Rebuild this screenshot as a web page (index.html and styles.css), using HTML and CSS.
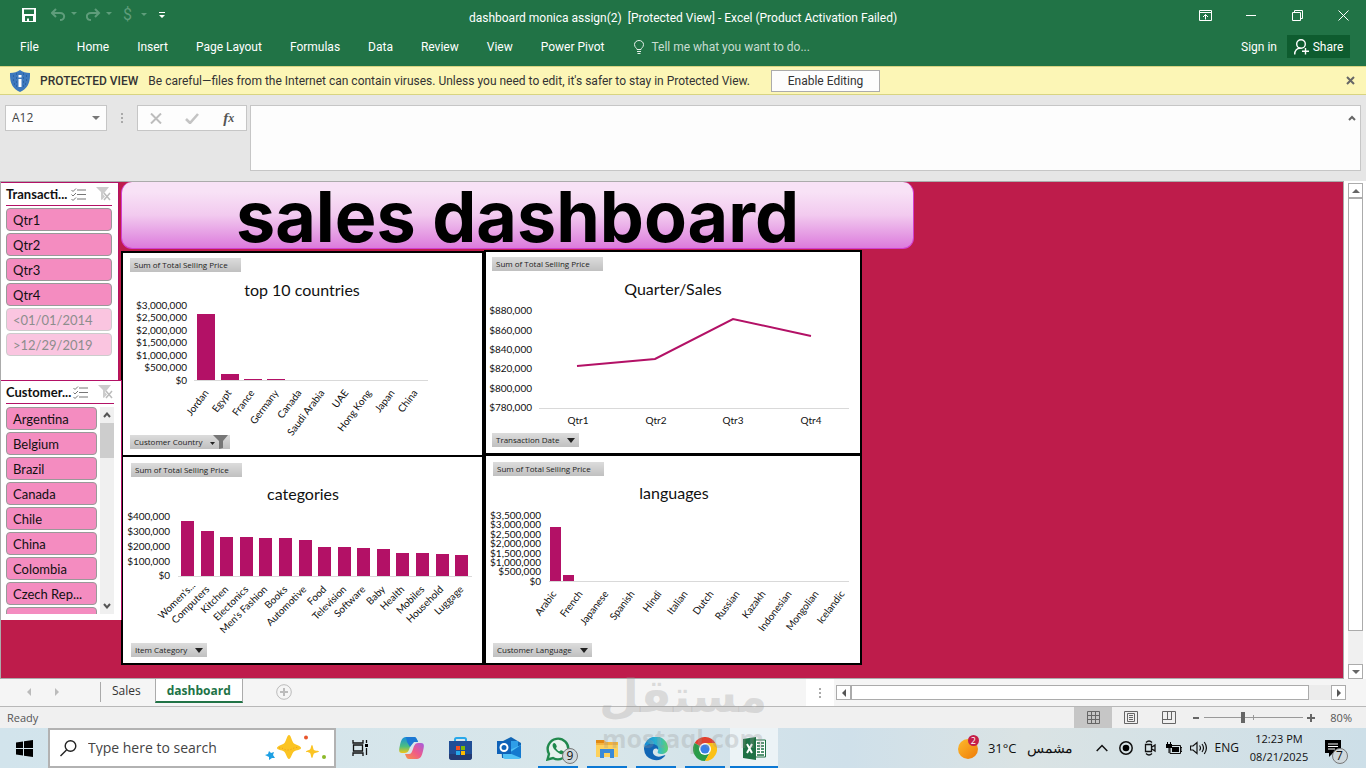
FILE: index.html
```html
<!DOCTYPE html>
<html lang="en">
<head>
<meta charset="utf-8">
<title>dashboard monica assign(2) - Excel</title>
<link rel="stylesheet" href="styles.css">
</head>
<body>
<div class="app">
  <header class="titlebar">
    <div class="quick">
      <button class="icon-btn" aria-label="Save"><svg width="14" height="14" viewBox="0 0 14 14"><path fill="#fff" fill-rule="evenodd" d="M0 0h14v14H0zM2 1.5v4.500h10V1.500zM3 8v5h2v-2.500h2V13h4V8z"/></svg></button>
      <button class="icon-btn dim" aria-label="Undo"><svg width="26" height="14" viewBox="0 0 26 14"><path d="M5 1 1 5l4 4M1 5h8c6 0 5 7 0 7" fill="none" stroke="#5f9d7b" stroke-width="2"/><path d="M20 4h6l-3 3z" fill="#5f9d7b"/></svg></button>
      <button class="icon-btn dim" aria-label="Redo"><svg width="26" height="14" viewBox="0 0 26 14"><path d="m9 1 4 4-4 4M13 5H5c-6 0-5 7 0 7" fill="none" stroke="#5f9d7b" stroke-width="2"/><path d="M20 4h6l-3 3z" fill="#5f9d7b"/></svg></button>
      <button class="icon-btn money" aria-label="Accounting format">$<svg width="6" height="4" viewBox="0 0 6 4"><path d="M0 0h6L3 3z" fill="#5f9d7b"/></svg></button>
      <button class="icon-btn" aria-label="Customize toolbar"><svg width="6" height="7" viewBox="0 0 6 7"><path d="M0 0h6v1H0zM0 3h6L3 6z" fill="#fff"/></svg></button>
    </div>
    <h1 class="doc-title">dashboard monica assign(2)&nbsp; [Protected View] - Excel (Product Activation Failed)</h1>
    <div class="win-buttons">
      <button aria-label="Ribbon display options"><svg width="13" height="11" viewBox="0 0 13 11"><path d="M.5.500h12v10H.500zM0 2.500h13M6.500 9.500V4.500M4 7l2.500-2.500L9 7" fill="none" stroke="#fff"/></svg></button>
      <button aria-label="Minimize"><svg width="10" height="11" viewBox="0 0 10 11"><path d="M0 5.500h10" stroke="#fff"/></svg></button>
      <button aria-label="Restore"><svg width="11" height="11" viewBox="0 0 11 11"><path d="M.5 2.500h8v8h-8zM2.500 2.500v-2h8v8h-2" fill="none" stroke="#fff"/></svg></button>
      <button aria-label="Close"><svg width="11" height="11" viewBox="0 0 11 11"><path d="m.5.500 10 10m0-10-10 10" stroke="#fff"/></svg></button>
    </div>
  </header>

  <nav class="ribbon" aria-label="Ribbon">
    <a class="tab file" href="#">File</a>
    <a class="tab" href="#">Home</a>
    <a class="tab" href="#">Insert</a>
    <a class="tab" href="#">Page Layout</a>
    <a class="tab" href="#">Formulas</a>
    <a class="tab" href="#">Data</a>
    <a class="tab" href="#">Review</a>
    <a class="tab" href="#">View</a>
    <a class="tab" href="#">Power Pivot</a>
    <label class="tell">
      <svg width="10" height="14" viewBox="0 0 10 14"><path d="M3 9.500C3 8 .5 7.500.5 4.500a4.500 4 0 0 1 9 0C9.500 7.500 7 8 7 9.500zM3 11.500h4M3.500 13.500h3" fill="none" stroke="#e6f0ea"/></svg>
      <input type="text" placeholder="Tell me what you want to do..." aria-label="Tell me what you want to do">
    </label>
    <a class="signin" href="#">Sign in</a>
    <button class="share"><svg width="15" height="16" viewBox="0 0 15 16"><circle cx="7" cy="5" r="4.300" fill="none" stroke="#fff" stroke-width="1.400"/><path d="M.7 15.500C.7 11.500 3 9 6.500 9.300M11.500 9v6.500M8 12.300h7" fill="none" stroke="#fff" stroke-width="1.400"/></svg>Share</button>
  </nav>

  <div class="notice" role="alert">
    <svg class="shield" width="20" height="22" viewBox="0 0 20 22"><path d="M10 0c2.500 2 6 3 10 3 .3 9-2 15.500-10 19C2 18.500-.3 12 0 3c4 0 7.500-1 10-3z" fill="#3c78bd"/><path d="M3 6h1M6 4h1M13 4h1M16 6h1M3 10h1M6 8h1M13 8h1M16 10h1M4 14h1M6 12h1M13 12h1M15 14h1M6 16h1M13 16h1" stroke="#1d4f8c"/><path d="M8.500 5h3v2.500h-3zM8.500 9h3v8h-3z" fill="#fff"/></svg>
    <strong class="notice-head">PROTECTED VIEW</strong>
    <span class="notice-text">Be careful—files from the Internet can contain viruses. Unless you need to edit, it's safer to stay in Protected View.</span>
    <button class="enable">Enable Editing</button>
    <button class="notice-close" aria-label="Close message"><svg width="9" height="9" viewBox="0 0 9 9"><path d="m1 1 7 7m0-7L1 8" stroke="#666" stroke-width="2"/></svg></button>
  </div>

  <div class="formula-row">
    <div class="name-box">
      <input type="text" value="A12" aria-label="Name box">
      <button class="icon-btn" aria-label="Choose a name"><svg width="8" height="4" viewBox="0 0 8 4"><path d="M0 0h8L4 4z" fill="#777"/></svg></button>
    </div>
    <svg class="grip" width="2" height="10" viewBox="0 0 2 10"><path d="M0 0h2v2H0zM0 4h2v2H0zM0 8h2v2H0z" fill="#aaa"/></svg>
    <div class="fx-box">
      <button class="icon-btn" aria-label="Cancel"><svg width="12" height="11" viewBox="0 0 12 11"><path d="m1 .5 10 10m0-10-10 10" stroke="#bdbdbd" stroke-width="2"/></svg></button>
      <button class="icon-btn" aria-label="Enter"><svg width="14" height="11" viewBox="0 0 14 11"><path d="m1 6 4 4 8-9" fill="none" stroke="#c4c4c4" stroke-width="2.600"/></svg></button>
      <button class="icon-btn fx" aria-label="Insert function"><i>f</i><i class="fx-x">x</i></button>
    </div>
    <div class="formula">
      <textarea aria-label="Formula bar"></textarea>
      <button class="icon-btn" aria-label="Collapse formula bar"><svg width="8" height="6" viewBox="0 0 8 6"><path d="m1 5 3-3 3 3" fill="none" stroke="#666" stroke-width="2"/></svg></button>
    </div>
  </div>

  <main class="work">
    <div class="sheet">
      <aside class="slicers">
        <section class="slicer">
          <div class="slicer-head">
            <h2>Transacti...</h2>
            <button class="icon-btn" aria-label="Multi-select"><svg width="16" height="13" viewBox="0 0 16 13"><path d="M6 2h9M6 6.500h9M6 11h9" stroke="#777"/><path d="m.5 2 1.500 1.500L5 .500m-4.500 6L2 8l3-3m-4.500 6L2 12.500l3-3" fill="none" stroke="#777"/></svg></button>
            <button class="icon-btn" aria-label="Clear filter"><svg width="16" height="14" viewBox="0 0 16 14"><path d="M0 0h13L9 5v6l-4 2V5z" fill="#ccc"/><path d="m8 6 6 7m0-7-6 7" stroke="#fff" stroke-width="3"/><path d="m8 6 6 7m0-7-6 7" stroke="#bbb" stroke-width="1.500"/></svg></button>
          </div>
          <div class="slicer-list">
            <button>Qtr1</button>
            <button>Qtr2</button>
            <button>Qtr3</button>
            <button>Qtr4</button>
            <button class="off">&lt;01/01/2014</button>
            <button class="off">&gt;12/29/2019</button>
          </div>
        </section>
        <section class="slicer wide">
          <div class="slicer-head">
            <h2>Customer...</h2>
            <button class="icon-btn" aria-label="Multi-select"><svg width="16" height="13" viewBox="0 0 16 13"><path d="M6 2h9M6 6.500h9M6 11h9" stroke="#777"/><path d="m.5 2 1.500 1.500L5 .500m-4.500 6L2 8l3-3m-4.500 6L2 12.500l3-3" fill="none" stroke="#777"/></svg></button>
            <button class="icon-btn" aria-label="Clear filter"><svg width="16" height="14" viewBox="0 0 16 14"><path d="M0 0h13L9 5v6l-4 2V5z" fill="#ccc"/><path d="m8 6 6 7m0-7-6 7" stroke="#fff" stroke-width="3"/><path d="m8 6 6 7m0-7-6 7" stroke="#bbb" stroke-width="1.500"/></svg></button>
          </div>
          <div class="slicer-body">
            <div class="slicer-list">
              <button>Argentina</button>
              <button>Belgium</button>
              <button>Brazil</button>
              <button>Canada</button>
              <button>Chile</button>
              <button>China</button>
              <button>Colombia</button>
              <button>Czech Rep...</button>
              <button aria-label="Next country"></button>
            </div>
            <div class="slicer-scroll">
              <button class="icon-btn" aria-label="Scroll up"><svg width="8" height="6" viewBox="0 0 8 6"><path d="m1 5 3-3.500L7 5" fill="none" stroke="#555" stroke-width="2"/></svg></button>
              <div class="slicer-thumb"></div>
              <button class="icon-btn" aria-label="Scroll down"><svg width="8" height="6" viewBox="0 0 8 6"><path d="m1 1 3 3.500L7 1" fill="none" stroke="#555" stroke-width="2"/></svg></button>
            </div>
          </div>
        </section>
      </aside>

      <div class="board">
        <h2 class="banner">sales dashboard</h2>
        <div class="charts">
          <div class="chart-col">
            <section class="chart">
              <button class="field">Sum of Total Selling Price</button>
              <svg class="plot" width="359" height="163" viewBox="123 272 359 163" role="img" aria-label="Top 10 countries by total selling price">
                <text class="ct" x="302" y="296">top 10 countries</text>
                <g class="yl"><text x="187" y="309">$3,000,000</text><text x="187" y="321">$2,500,000</text><text x="187" y="334">$2,000,000</text><text x="187" y="346">$1,500,000</text><text x="187" y="359">$1,000,000</text><text x="187" y="371">$500,000</text><text x="187" y="384">$0</text></g>
                <path class="bars" d="M197 314h18v66h-18zM221 374h18v6h-18zM244 379h18v1h-18zM267 379h18v1h-18z"/>
                <path class="axis" d="M194 380.500h234"/>
                <g class="xl"><text transform="translate(209 393) rotate(-53)">Jordan</text><text transform="translate(232 393) rotate(-53)">Egypt</text><text transform="translate(255 393) rotate(-53)">France</text><text transform="translate(279 393) rotate(-53)">Germany</text><text transform="translate(302 393) rotate(-53)">Canada</text><text transform="translate(325 393) rotate(-53)">Saudi Arabia</text><text transform="translate(349 393) rotate(-53)">UAE</text><text transform="translate(372 393) rotate(-53)">Hong Kong</text><text transform="translate(395 393) rotate(-53)">Japan</text><text transform="translate(418 393) rotate(-53)">China</text></g>
              </svg>
              <button class="field f-country">Customer Country<svg width="20" height="14" viewBox="0 0 20 14"><path d="M0 7h5l-2.500 3z" fill="#222"/><path d="M3 0h15l-5 6v7l-4 1V6z" fill="#777"/></svg></button>
            </section>
            <section class="chart lower">
              <button class="field">Sum of Total Selling Price</button>
              <svg class="plot" width="359" height="166" viewBox="123 477 359 166" role="img" aria-label="Categories by total selling price">
                <text class="ct" x="303" y="500">categories</text>
                <g class="yl"><text x="170" y="520">$400,000</text><text x="170" y="535">$300,000</text><text x="170" y="550">$200,000</text><text x="170" y="565">$100,000</text><text x="170" y="579">$0</text></g>
                <path class="bars" d="M181 521h13v55h-13zM201 531h13v45h-13zM220 537h13v39h-13zM240 537h13v39h-13zM259 538h13v38h-13zM279 538h13v38h-13zM299 540h13v36h-13zM318 547h13v29h-13zM338 547h13v29h-13zM357 548h13v28h-13zM377 549h13v27h-13zM396 553h13v23h-13zM416 553h13v23h-13zM436 554h13v22h-13zM455 555h13v21h-13z"/>
                <path class="axis" d="M178 576.500h294"/>
                <g class="xl"><text transform="translate(196 586) rotate(-45)">Women's...</text><text transform="translate(210 590) rotate(-45)">Computers</text><text transform="translate(229 590) rotate(-45)">Kitchen</text><text transform="translate(249 590) rotate(-45)">Electonics</text><text transform="translate(268 590) rotate(-45)">Men's Fashion</text><text transform="translate(288 590) rotate(-45)">Books</text><text transform="translate(307 590) rotate(-45)">Automotive</text><text transform="translate(327 590) rotate(-45)">Food</text><text transform="translate(347 590) rotate(-45)">Television</text><text transform="translate(366 590) rotate(-45)">Software</text><text transform="translate(386 590) rotate(-45)">Baby</text><text transform="translate(405 590) rotate(-45)">Health</text><text transform="translate(425 590) rotate(-45)">Mobiles</text><text transform="translate(444 590) rotate(-45)">Household</text><text transform="translate(464 590) rotate(-45)">Luggage</text></g>
              </svg>
              <button class="field f-item">Item Category<svg width="8" height="5" viewBox="0 0 8 5"><path d="M0 0h8L4 5z" fill="#222"/></svg></button>
            </section>
          </div>
          <div class="chart-col right">
            <section class="chart">
              <button class="field">Sum of Total Selling Price</button>
              <svg class="plot" width="374" height="162" viewBox="486 271 374 162" role="img" aria-label="Sales by quarter">
                <text class="ct" x="673" y="295">Quarter/Sales</text>
                <g class="yl"><text x="532" y="314">$880,000</text><text x="532" y="334">$860,000</text><text x="532" y="353">$840,000</text><text x="532" y="372">$820,000</text><text x="532" y="392">$800,000</text><text x="532" y="411">$780,000</text></g>
                <path class="axis" d="M539 408.500h310"/>
                <path d="M577 366 655 359 733 319 811 336" fill="none" stroke="#b31166" stroke-width="2"/>
                <g class="ql"><text x="578" y="424">Qtr1</text><text x="656" y="424">Qtr2</text><text x="733" y="424">Qtr3</text><text x="811" y="424">Qtr4</text></g>
              </svg>
              <button class="field f-date">Transaction Date<svg width="8" height="5" viewBox="0 0 8 5"><path d="M0 0h8L4 5z" fill="#222"/></svg></button>
            </section>
            <section class="chart lower">
              <button class="field">Sum of Total Selling Price</button>
              <svg class="plot" width="374" height="167" viewBox="486 476 374 167" role="img" aria-label="Languages by total selling price">
                <text class="ct" x="674" y="499">languages</text>
                <g class="yl"><text x="541" y="519">$3,500,000</text><text x="541" y="528">$3,000,000</text><text x="541" y="538">$2,500,000</text><text x="541" y="547">$2,000,000</text><text x="541" y="557">$1,500,000</text><text x="541" y="566">$1,000,000</text><text x="541" y="575">$500,000</text><text x="541" y="585">$0</text></g>
                <path class="bars" d="M550 527h11v54h-11zM563 575h11v6h-11z"/>
                <path class="axis" d="M549 581.500h300"/>
                <g class="xl"><text transform="translate(557 594) rotate(-53)">Arabic</text><text transform="translate(583 594) rotate(-53)">French</text><text transform="translate(609 594) rotate(-53)">Japanese</text><text transform="translate(635 594) rotate(-53)">Spanish</text><text transform="translate(662 594) rotate(-53)">Hindi</text><text transform="translate(688 594) rotate(-53)">Italian</text><text transform="translate(714 594) rotate(-53)">Dutch</text><text transform="translate(740 594) rotate(-53)">Russian</text><text transform="translate(766 594) rotate(-53)">Kazakh</text><text transform="translate(792 594) rotate(-53)">Indonesian</text><text transform="translate(819 594) rotate(-53)">Mongolian</text><text transform="translate(845 594) rotate(-53)">Icelandic</text></g>
              </svg>
              <button class="field f-lang">Customer Language<svg width="8" height="5" viewBox="0 0 8 5"><path d="M0 0h8L4 5z" fill="#222"/></svg></button>
            </section>
          </div>
        </div>
      </div>
    </div>
    <div class="vscroll">
      <button aria-label="Scroll up"><svg width="8" height="4" viewBox="0 0 8 4"><path d="M0 4h8L4 0z" fill="#666"/></svg></button>
      <div class="vthumb"></div>
      <div class="vtrack"></div>
      <button aria-label="Scroll down"><svg width="8" height="4" viewBox="0 0 8 4"><path d="M0 0h8L4 4z" fill="#666"/></svg></button>
    </div>
  </main>

  <div class="sheet-tabs">
    <div class="tab-arrows">
      <button class="icon-btn" aria-label="Previous sheet"><svg width="4" height="8" viewBox="0 0 4 8"><path d="M4 0v8L0 4z" fill="#bbb"/></svg></button>
      <button class="icon-btn" aria-label="Next sheet"><svg width="4" height="8" viewBox="0 0 4 8"><path d="M0 0v8l4-4z" fill="#bbb"/></svg></button>
    </div>
    <a class="sheet-tab" href="#">Sales</a>
    <a class="sheet-tab active" href="#">dashboard</a>
    <button class="icon-btn add" aria-label="New sheet"><svg width="16" height="16" viewBox="0 0 16 16"><circle cx="8" cy="8" r="7.300" fill="none" stroke="#bbb"/><path d="M8 4v8M4 8h8" stroke="#bbb" stroke-width="2"/></svg></button>
    <div class="hgrip"><svg width="2" height="10" viewBox="0 0 2 10"><path d="M0 0h2v2H0zM0 4h2v2H0zM0 8h2v2H0z" fill="#aaa"/></svg></div>
    <div class="hscroll">
      <button aria-label="Scroll left"><svg width="4" height="8" viewBox="0 0 4 8"><path d="M4 0v8L0 4z" fill="#555"/></svg></button>
      <div class="hthumb"></div>
      <div class="htrack"></div>
      <button aria-label="Scroll right"><svg width="4" height="8" viewBox="0 0 4 8"><path d="M0 0v8l4-4z" fill="#555"/></svg></button>
    </div>
  </div>

  <div class="status">
    <span class="ready">Ready</span>
    <button class="view on" aria-label="Normal view"><svg width="13" height="13" viewBox="0 0 13 13"><path d="M.5.500h12v12H.500zM4.500 0v13M8.500 0v13M0 4.500h13M0 8.500h13" fill="none" stroke="#666"/></svg></button>
    <button class="view" aria-label="Page layout view"><svg width="14" height="13" viewBox="0 0 14 13"><path d="M.5.500h13v12H.500zM3.500 2.500h7v8h-7zM5 4.500h4M5 6.500h4M5 8.500h4" fill="none" stroke="#666"/></svg></button>
    <button class="view" aria-label="Page break view"><svg width="14" height="13" viewBox="0 0 14 13"><path d="M.5.500h13v12H.500zM5.500 0v8M9.500 0v8M0 8.500h10" fill="none" stroke="#666"/></svg></button>
    <button class="icon-btn zoom-btn" aria-label="Zoom out"><svg width="8" height="8" viewBox="0 0 8 8"><path d="M1 4h6" stroke="#666" stroke-width="2"/></svg></button>
    <input class="zoom" type="range" min="0" max="100" value="39" aria-label="Zoom">
    <button class="icon-btn zoom-btn" aria-label="Zoom in"><svg width="8" height="8" viewBox="0 0 8 8"><path d="M0 4h8M4 0v8" stroke="#666" stroke-width="2"/></svg></button>
    <span class="percent">80%</span>
  </div>

  <footer class="taskbar">
    <button class="task start" aria-label="Start"><svg width="17" height="17" viewBox="0 0 17 17"><path d="M0 2.500 7 1.500V8H0zM8 1.300 17 0v8H8zM0 9h7v6.500l-7-1zM8 9h9v8l-9-1.300z"/></svg></button>
    <label class="search">
      <svg width="17" height="17" viewBox="0 0 17 17"><circle cx="10.500" cy="6" r="5.300" fill="none" stroke="#222" stroke-width="1.400"/><path d="m6.500 10-6 6" stroke="#222" stroke-width="1.400"/></svg>
      <input type="text" placeholder="Type here to search" aria-label="Type here to search">
      <svg width="62" height="26" viewBox="0 0 62 26"><path d="M24 0c2 0 3 7 5 8.500S36 11 36 13s-5 2-7 3.500S26 24 24 24s-3-6-5-7.500S12 15 12 13s5-3 7-4.500S22 0 24 0z" fill="#fbc423"/><path d="M14 13c4-1 4 2 9 2 4 0 7-4 11-2" fill="none" stroke="#ef9a1a" stroke-dasharray="1 2"/><path d="M47 10c1 0 1 4 2 5s5 .500 5 1.500-4 1-5 2-1 4.500-2 4.500-1-4-2-5-4-.500-4-1.500 3-1 4-2 1-4.500 2-4.500z" fill="#fbc423"/><path d="m4 16 2 2 3-1-1 3 2 3-3 0-3 2 0-3-4-2 3-1z" fill="#1ea0e4"/><circle cx="41" cy="2.500" r="2" fill="#e8562c"/><circle cx="59" cy="22" r="2" fill="#8cb929"/></svg>
    </label>
    <button class="task" aria-label="Task view"><svg width="17" height="16" viewBox="0 0 17 16"><path d="M1 0v3h10V0M1 16v-3h10v3M1.500 5h9v6h-9z" fill="none" stroke="#111" stroke-width="1.300"/><path d="M14.500 0v3M14.500 8v7" stroke="#111" stroke-width="1.300"/><path d="M13 4h3v3h-3z"/></svg></button>
    <button class="task apart" aria-label="Copilot"><svg width="25" height="22" viewBox="0 0 25 22"><defs><linearGradient id="cpa" x1="0" y1="0" x2="0" y2="1"><stop stop-color="#168edd"/><stop offset=".6" stop-color="#4fbf7c"/><stop offset="1" stop-color="#f1c518"/></linearGradient><linearGradient id="cpb" x1="1" y1="0" x2="0" y2="1"><stop stop-color="#a55ce0"/><stop offset=".5" stop-color="#ef5a88"/><stop offset="1" stop-color="#f99545"/></linearGradient></defs><path d="M7 0h8c2 0 3 2 4 5h-4c-2 0-3 2-4 5s-2 6-5 6H3c-4 0-3-4-2-8S3 0 7 0z" fill="url(#cpa)"/><path d="M7 0h8c2 0 3 2 4 5h-4L11 10 8 5z" fill="#1c78d4"/><path d="M18 22h-8c-2 0-3-2-4-5h4c2 0 3-2 4-5s2-6 5-6h3c4 0 3 4 2 8s-2 8-6 8z" fill="url(#cpb)"/></svg></button>
    <button class="task" aria-label="Microsoft Store"><svg width="23" height="23" viewBox="0 0 23 23"><path d="M6 5V2.500Q6 1 7.500 1h8Q17 1 17 2.500V5" fill="none" stroke="#28a8ea" stroke-width="2"/><path d="M0 4h23v16q0 3-3 3H3q-3 0-3-3z" fill="#1f4e96"/><path d="M0 17h23v3q0 3-3 3H3q-3 0-3-3z" fill="#243a72"/><path d="M7 9h4v4H7z" fill="#f25022"/><path d="M12 9h4v4h-4z" fill="#7fba00"/><path d="M7 14h4v4H7z" fill="#28a8ea"/><path d="M12 14h4v4h-4z" fill="#ffb900"/></svg></button>
    <button class="task" aria-label="Outlook"><svg width="24" height="22" viewBox="0 0 24 22"><path d="M4 5 14 0l10 6v15H5z" fill="#1066b5"/><path d="M7 4h14v10H7z" fill="#2f9ee8"/><path d="m24 8-18 8v4q0 2 2 2h14q2 0 2-2z" fill="#50c0f5"/><path d="m24 8-12 8 12 5z" fill="#1479cf"/><path d="M0 4h14v13H0z" fill="#0f62b8"/><circle cx="7" cy="10.500" r="3.500" fill="none" stroke="#fff" stroke-width="2"/></svg></button>
    <button class="task open" aria-label="WhatsApp, 9 unread"><span class="badged"><svg width="24" height="24" viewBox="0 0 24 24"><path d="M1.500 22.500 3 17A10.300 10.300 0 1 1 7 21z" fill="#e9f2ee" stroke="#21894d" stroke-width="2.400"/><path d="M8 6c-2 1-2 4 1 7s6 5 8 4c2-1 1-2.500 0-3s-2-1-2.500-.5-1 1-1.500.7c-1.500-.7-2.500-2-3-3 0-.7 1-1 .7-2S9.500 5.500 8 6z" fill="#21894d"/></svg><span class="badge b9">9</span></span></button>
    <button class="task open" aria-label="File Explorer"><svg width="22" height="20" viewBox="0 0 22 20"><path d="M0 1h8l2 2h12v15H0z" fill="#f4b33d"/><path d="M0 1h8v3H0z" fill="#e28a14"/><path d="M0 6h22v12H0z" fill="#fdd15c"/><path d="M4 10h14v9h-4v-5H8v5H4z" fill="#3a8ad8"/></svg></button>
    <button class="task open" aria-label="Edge"><svg width="24" height="24" viewBox="0 0 24 24"><defs><linearGradient id="eda"><stop stop-color="#1487d4"/><stop offset=".6" stop-color="#2fb8cf"/><stop offset="1" stop-color="#5fd16a"/></linearGradient></defs><path d="M0 12A12 12 0 0 1 24 11c0 4-3 6-7 6-3 0-4-1-3-3 1-3-1-5-4-5-5 0-9 3-10 3z" fill="url(#eda)"/><path d="M0 12c0-3 4-5 8-5 4 0 7 2 6 6-1-2-4-2-5 1-1 4 4 7 9 5 2-.5 4-1.500 3 0A12 12 0 0 1 0 12z" fill="#1266b5"/></svg></button>
    <button class="task open" aria-label="Chrome"><svg width="24" height="24" viewBox="0 0 24 24"><path d="M12 12 1.600 6A12 12 0 0 1 22.400 6z" fill="#e1412f"/><path d="M12 12 1.600 6A12 12 0 0 0 12 24l5.200-9z" fill="#2a9c49"/><path d="M12 6h10.400A12 12 0 0 1 12 24l5.200-9z" fill="#fbc116"/><circle cx="12" cy="12" r="6" fill="#fff"/><circle cx="12" cy="12" r="4.600" fill="#3a7fe6"/></svg></button>
    <button class="task open current" aria-label="Excel"><svg width="23" height="23" viewBox="0 0 23 23"><path d="M11 3h11.500v17H11z" fill="#fff" stroke="#1e7145"/><path d="M14 6h3M18 6h3M14 9h3M18 9h3M14 12h3M18 12h3M14 15h3M18 15h3M14 18h7" stroke="#1e7145" stroke-width="1.500"/><path d="M0 2 13 0v23L0 21z" fill="#1e7145"/><path d="m4 7 5 9M9 7l-5 9" stroke="#fff" stroke-width="2"/></svg></button>

    <div class="tray">
      <button class="weather"><span class="badged"><svg width="20" height="22" viewBox="0 0 20 22"><defs><linearGradient id="sun" x1="0" y1="0" x2="1" y2="1"><stop stop-color="#fdbb2d"/><stop offset="1" stop-color="#ee7a08"/></linearGradient></defs><circle cx="10" cy="12" r="10" fill="url(#sun)"/></svg><span class="badge b2">2</span></span><span>31°C</span><span class="arabic" lang="ar" dir="rtl">مشمس</span></button>
      <button class="icon-btn" aria-label="Hidden icons"><svg width="12" height="8" viewBox="0 0 12 8"><path d="m.7 7 5.300-5.500L11.300 7" fill="none" stroke="#111" stroke-width="1.500"/></svg></button>
      <button class="icon-btn" aria-label="Recorder"><svg width="14" height="14" viewBox="0 0 14 14"><circle cx="7" cy="7" r="6.200" fill="none" stroke="#111" stroke-width="1.500"/><circle cx="7" cy="7" r="3.300"/></svg></button>
      <button class="icon-btn" aria-label="Meet now"><svg width="12" height="16" viewBox="0 0 12 16"><path d="M1.500 4.500h6v7h-6zM8 7l3-2v6L8 9M2 2.500q3-3 6 0M2 13.500q3 3 6 0" fill="none" stroke="#111" stroke-width="1.300"/></svg></button>
      <button class="icon-btn" aria-label="Battery"><svg width="16" height="13" viewBox="0 0 16 13"><path d="M4 3.500h10.500v8H4zM14.500 5.500H16v4h-1.500" fill="none" stroke="#111"/><path d="M6 5h7v5H6zM0 2h6v4H0zM1 0h1v3H1zM4 0h1v3H4zM2.500 6h1v5h-1z"/></svg></button>
      <button class="icon-btn" aria-label="Volume"><svg width="17" height="14" viewBox="0 0 17 14"><path d="M.5 5H3l4-3.500v11L3 9H.500zM9.500 4.500q2 2.500 0 5M12 3q3 4 0 8M14.300 1q4.200 6 0 12" fill="none" stroke="#111" stroke-width="1.200"/></svg></button>
      <button class="lang">ENG</button>
      <button class="clock"><span>12:23 PM</span><span>08/21/2025</span></button>
      <button class="icon-btn notes" aria-label="7 notifications"><span class="badged"><svg width="16" height="17" viewBox="0 0 16 17"><path d="M0 0h16v13H8l-4 4v-4H0z"/><path d="M3 4h10M3 6.500h10M3 9h7" stroke="#fff"/></svg><span class="badge b7">7</span></span></button>
    </div>
  </footer>

  <div class="watermark" aria-hidden="true">
    <span class="wm-ar" lang="ar">مستقل</span>
    <span class="wm-en">mostaql.com</span>
  </div>
</div>
</body>
</html>
```
FILE: styles.css
```css
* { box-sizing: border-box; }
body { margin: 0; font: 12px/16px "Open Sans", "Noto Sans", sans-serif; color: #333; }
button, input, textarea { font: inherit; color: inherit; border: 0; padding: 0; margin: 0; background: none; border-radius: 0; }
input:focus, textarea:focus { outline: none; }
a { color: inherit; text-decoration: none; }
h1, h2 { margin: 0; font-size: inherit; font-weight: 400; }
svg { display: block; flex: none; }
.icon-btn { display: flex; align-items: center; justify-content: center; }

.app { position: relative; display: flex; flex-direction: column; min-height: 100vh; background: #e6e6e6; }
.titlebar, .ribbon, .notice { font-family: Roboto, "Open Sans", sans-serif; }

/* title bar */
.titlebar { display: grid; grid-template-columns: 1fr auto 1fr; align-items: center; height: 30px; background: #217346; color: #fff; }
.quick { display: flex; align-items: center; gap: 9px; padding-left: 22px; }
.quick .icon-btn:first-child { margin-right: 6px; }
.money { gap: 9px; width: 24px; margin-left: 2px; color: #5f9d7b; font-size: 16px; }
.quick .icon-btn:last-child { margin-left: 3px; }
.doc-title { white-space: nowrap; padding-top: 5px; }
.win-buttons { display: flex; justify-content: flex-end; }
.win-buttons button { display: flex; align-items: center; justify-content: center; width: 46px; height: 30px; }

/* ribbon */
.ribbon { display: flex; align-items: center; height: 36px; padding-bottom: 3px; background: #217346; color: #fff; }
.tab { padding: 0 14px; white-space: nowrap; }
.tab.file { padding: 0 24px 0 20px; }
.tell { display: flex; flex: 1; align-items: center; gap: 7px; margin-left: 16px; }
.tell input { flex: 1; }
.tell input::placeholder { color: #c8ddd1; opacity: 1; }
.share { display: flex; align-items: center; justify-content: center; gap: 4px; width: 63px; height: 23px; margin: 0 16px 0 10px; background: #0e5c2f; }

/* protected view message */
.notice { display: flex; align-items: center; height: 29px; padding-left: 10px; background: #fcf6b6; border-top: 1px solid #d8d481; border-bottom: 1px solid #d8d481; white-space: nowrap; }
.notice-head { margin: 0 10px; font-weight: 500; }
.enable { width: 109px; height: 22px; margin-left: 21px; background: #fdfdfd; border: 1px solid #ababab; }
.notice-close { margin: 0 11px 0 auto; }

/* formula row */
.formula-row { display: flex; align-items: flex-start; padding: 10px 5px; }
.name-box { display: flex; align-items: center; width: 102px; height: 26px; padding: 0 6px; background: #fdfdfd; border: 1px solid #c6c6c6; }
.name-box input { flex: 1; min-width: 0; color: #444; }
.grip { margin: 8px 14px; }
.fx-box { display: flex; align-items: center; justify-content: space-around; width: 110px; height: 26px; background: #fdfdfd; border: 1px solid #c6c6c6; }
.fx { font: 700 15px/20px "Liberation Serif", serif; color: #555; }
.fx-x { font-size: 12px; }
.formula { display: flex; flex: 1; align-items: flex-start; height: 66px; margin-left: 3px; padding-right: 4px; background: #fdfdfd; border: 1px solid #c6c6c6; }
.formula textarea { flex: 1; height: 100%; resize: none; }
.formula .icon-btn { margin-top: 9px; }

/* worksheet */
.work { display: flex; flex: 1; background: #fff; }
.sheet { display: flex; flex: 1; align-items: flex-start; background: #be1c4b; border: 1px solid #ababab; }
.slicers { flex: none; width: 120px; font-family: Lato, sans-serif; color: #111; }
.slicer { width: 118px; height: 198px; padding: 0 6px 0 5px; background: #fff; border-top: 1px solid #b31166; border-right: 1px solid #b31166; }
.slicer.wide { width: 121px; height: 240px; padding-right: 7px; position: relative; z-index: 1; }
.slicer-head { display: flex; align-items: center; height: 23px; margin-bottom: 2px; border-bottom: 1px solid #b31166; }
.wide .slicer-head { margin-bottom: 3px; }
.slicer-head h2 { flex: 1; font-weight: 700; font-size: 13px; white-space: nowrap; }
.slicer-head .icon-btn + .icon-btn { margin-left: 9px; }
.slicer-body { display: flex; gap: 3px; height: 207px; overflow: hidden; }
.slicer-list { display: flex; flex: 1; flex-direction: column; gap: 2px; }
.slicer-list button { flex: none; height: 23px; padding-left: 6px; font-size: 13px; text-align: left; background: #f48cc0; border: 1px solid #999; border-radius: 4px; white-space: nowrap; }
.slicer-list .off { color: #8d8d8d; background: #fac5e0; border-color: #ccc; }
.slicer-scroll { display: flex; flex-direction: column; width: 14px; background: #f0f0f0; }
.slicer-scroll .icon-btn { height: 16px; }
.slicer-thumb { height: 35px; margin-bottom: auto; background: #cdcdcd; }

.banner { width: 793px; height: 67px; font: 700 70px/70px Inter, sans-serif; color: #000; text-align: center; background: linear-gradient(#f8e2f6 15%, #f2caef 50%, #dc7bdc); border: 1px solid #d23fd0; border-top: 0; border-radius: 11px; }
.charts { display: flex; }
.chart-col { width: 363px; padding-top: 2px; }
.chart-col.right { width: 378px; padding-top: 1px; }
.chart { display: flex; flex-direction: column; align-items: flex-start; padding: 5px 0 6px; background: #fff; border: 2px solid #000; }
.right .chart:first-child { border-bottom-width: 3px; }
.chart.lower { padding: 6px 0; border-top: 0; }
.field { display: flex; align-items: center; justify-content: space-between; width: 111px; height: 14px; margin-left: 7px; padding: 0 4px; font: 8px/14px "Open Sans", sans-serif; color: #222; background: linear-gradient(#dcdcdc, #c0c0c0); white-space: nowrap; }
.right .field { margin-left: 6px; }
.lower .field { margin-left: 8px; }
.right .lower .field { margin-left: 7px; }
.f-country { width: 100px; padding-right: 0; }
.f-item { width: 76px; }
.f-date { width: 87px; }
.f-lang { width: 99px; }
.plot { overflow: visible; font-family: Lato, sans-serif; font-size: 10px; fill: #111; }
.ct { font-size: 16px; text-anchor: middle; }
.yl, .xl { text-anchor: end; }
.ql { text-anchor: middle; }
.bars { fill: #b31166; }
.axis { stroke: #d9d9d9; }

.vscroll { display: flex; flex-direction: column; width: 15px; margin: 2px 3px 0 4px; }
.vscroll button, .hscroll button { display: flex; flex: none; align-items: center; justify-content: center; width: 15px; height: 15px; background: #fff; border: 1px solid #ababab; }
.vthumb { flex: 433; border: 1px solid #ababab; background: #fff; }
.vtrack { flex: 33; background: #f0f0f0; }

/* sheet tabs */
.sheet-tabs { display: flex; align-items: flex-start; height: 28px; background: #f5f5f5; border-bottom: 1px solid #b8b8b8; }
.tab-arrows { display: flex; gap: 24px; width: 101px; height: 20px; margin-top: 3px; padding-left: 27px; border-right: 1px solid #aaa; }
.sheet-tab { padding: 4px 14px 0 11px; }
.sheet-tab.active { height: 24px; padding: 4px 11px 0; font-weight: 700; color: #217346; background: #fff; border: 1px solid #ababab; border-top: 0; border-bottom: 2px solid #217346; }
.add { margin: 5px 0 0 33px; }
.hgrip { display: flex; align-items: center; justify-content: center; width: 28px; height: 27px; margin-left: auto; background: #fff; }
.hscroll { display: flex; width: 510px; margin: 6px 20px 0 2px; background: #ececec; }
.hthumb { flex: 458; border: 1px solid #ababab; background: #fff; }
.htrack { flex: 22; }

/* status bar */
.status { display: flex; align-items: center; height: 21px; padding-right: 14px; background: #f0f0f0; font-size: 11px; color: #555; }
.ready { flex: 1; padding-left: 7px; }
.view { display: flex; align-items: center; justify-content: center; width: 38px; height: 21px; }
.view.on { background: #c6c6c6; }
.zoom-btn { width: 10px; margin: 0 3px; }
.zoom { appearance: none; width: 99px; height: 16px; background: linear-gradient(#999, #999) center / 100% 1px no-repeat, linear-gradient(#999, #999) center / 1px 5px no-repeat; }
.zoom::-webkit-slider-thumb { appearance: none; width: 4px; height: 11px; background: #666; }
.percent { width: 33px; text-align: right; }

/* taskbar */
.taskbar { display: flex; height: 40px; background: linear-gradient(90deg, #d2e4ec, #d8e6ea 45%, #cfe0ea 62%, #dae3e4 75%, #cddfe8); color: #111; }
.task { display: flex; flex: none; align-items: center; justify-content: center; width: 48px; height: 40px; margin-right: 1px; }
.task.start { margin-right: 0; }
.task.apart { margin-left: 2px; }
.task.open { background: linear-gradient(#0b78d4, #0b78d4) bottom / 40px 2px no-repeat; padding-top: 1px; }
.task.current { background: linear-gradient(#0b78d4, #0b78d4) bottom / 100% 2px no-repeat, #ecf3f6; }
.search { display: flex; align-items: center; width: 288px; height: 40px; padding: 0 7px 0 10px; background: #fff; border: 2px solid #b2b2b2; }
.search input { flex: 1; min-width: 0; margin-left: 11px; font-size: 14px; }
.search input::placeholder { color: #444; opacity: 1; }
.badged { position: relative; display: block; }
.badge { position: absolute; display: flex; align-items: center; justify-content: center; border-radius: 50%; font-size: 12px; line-height: 12px; }
.b9, .b7 { width: 16px; height: 16px; background: #cfd8dc; border: 1px solid #777; }
.b9 { left: 16px; top: 11px; }
.b7 { left: 7px; top: 8px; }
.b2 { left: 10px; top: -2px; width: 11px; height: 11px; background: #c41e48; color: #fff; font-size: 9px; }
.tray { display: flex; align-items: center; margin-left: auto; padding-right: 18px; gap: 9px; }
.tray .icon-btn { width: 15px; }
.weather { display: flex; align-items: center; gap: 10px; margin-right: 13px; font-size: 13px; }
.arabic { font-size: 14px; }
.lang { font-size: 12px; }
.clock { display: flex; flex-direction: column; align-items: center; width: 62px; font-size: 11px; line-height: 18px; }
.tray .notes { margin: 0 8px 0 6px; }

.watermark { position: absolute; right: 601px; bottom: 16px; display: flex; flex-direction: column; align-items: center; width: 164px; color: rgba(150, 150, 150, .28); pointer-events: none; white-space: nowrap; }
.wm-ar { font: 700 46px/56px "DejaVu Sans", sans-serif; }
.wm-en { font: 700 25px/28px "Open Sans", sans-serif; }
```
